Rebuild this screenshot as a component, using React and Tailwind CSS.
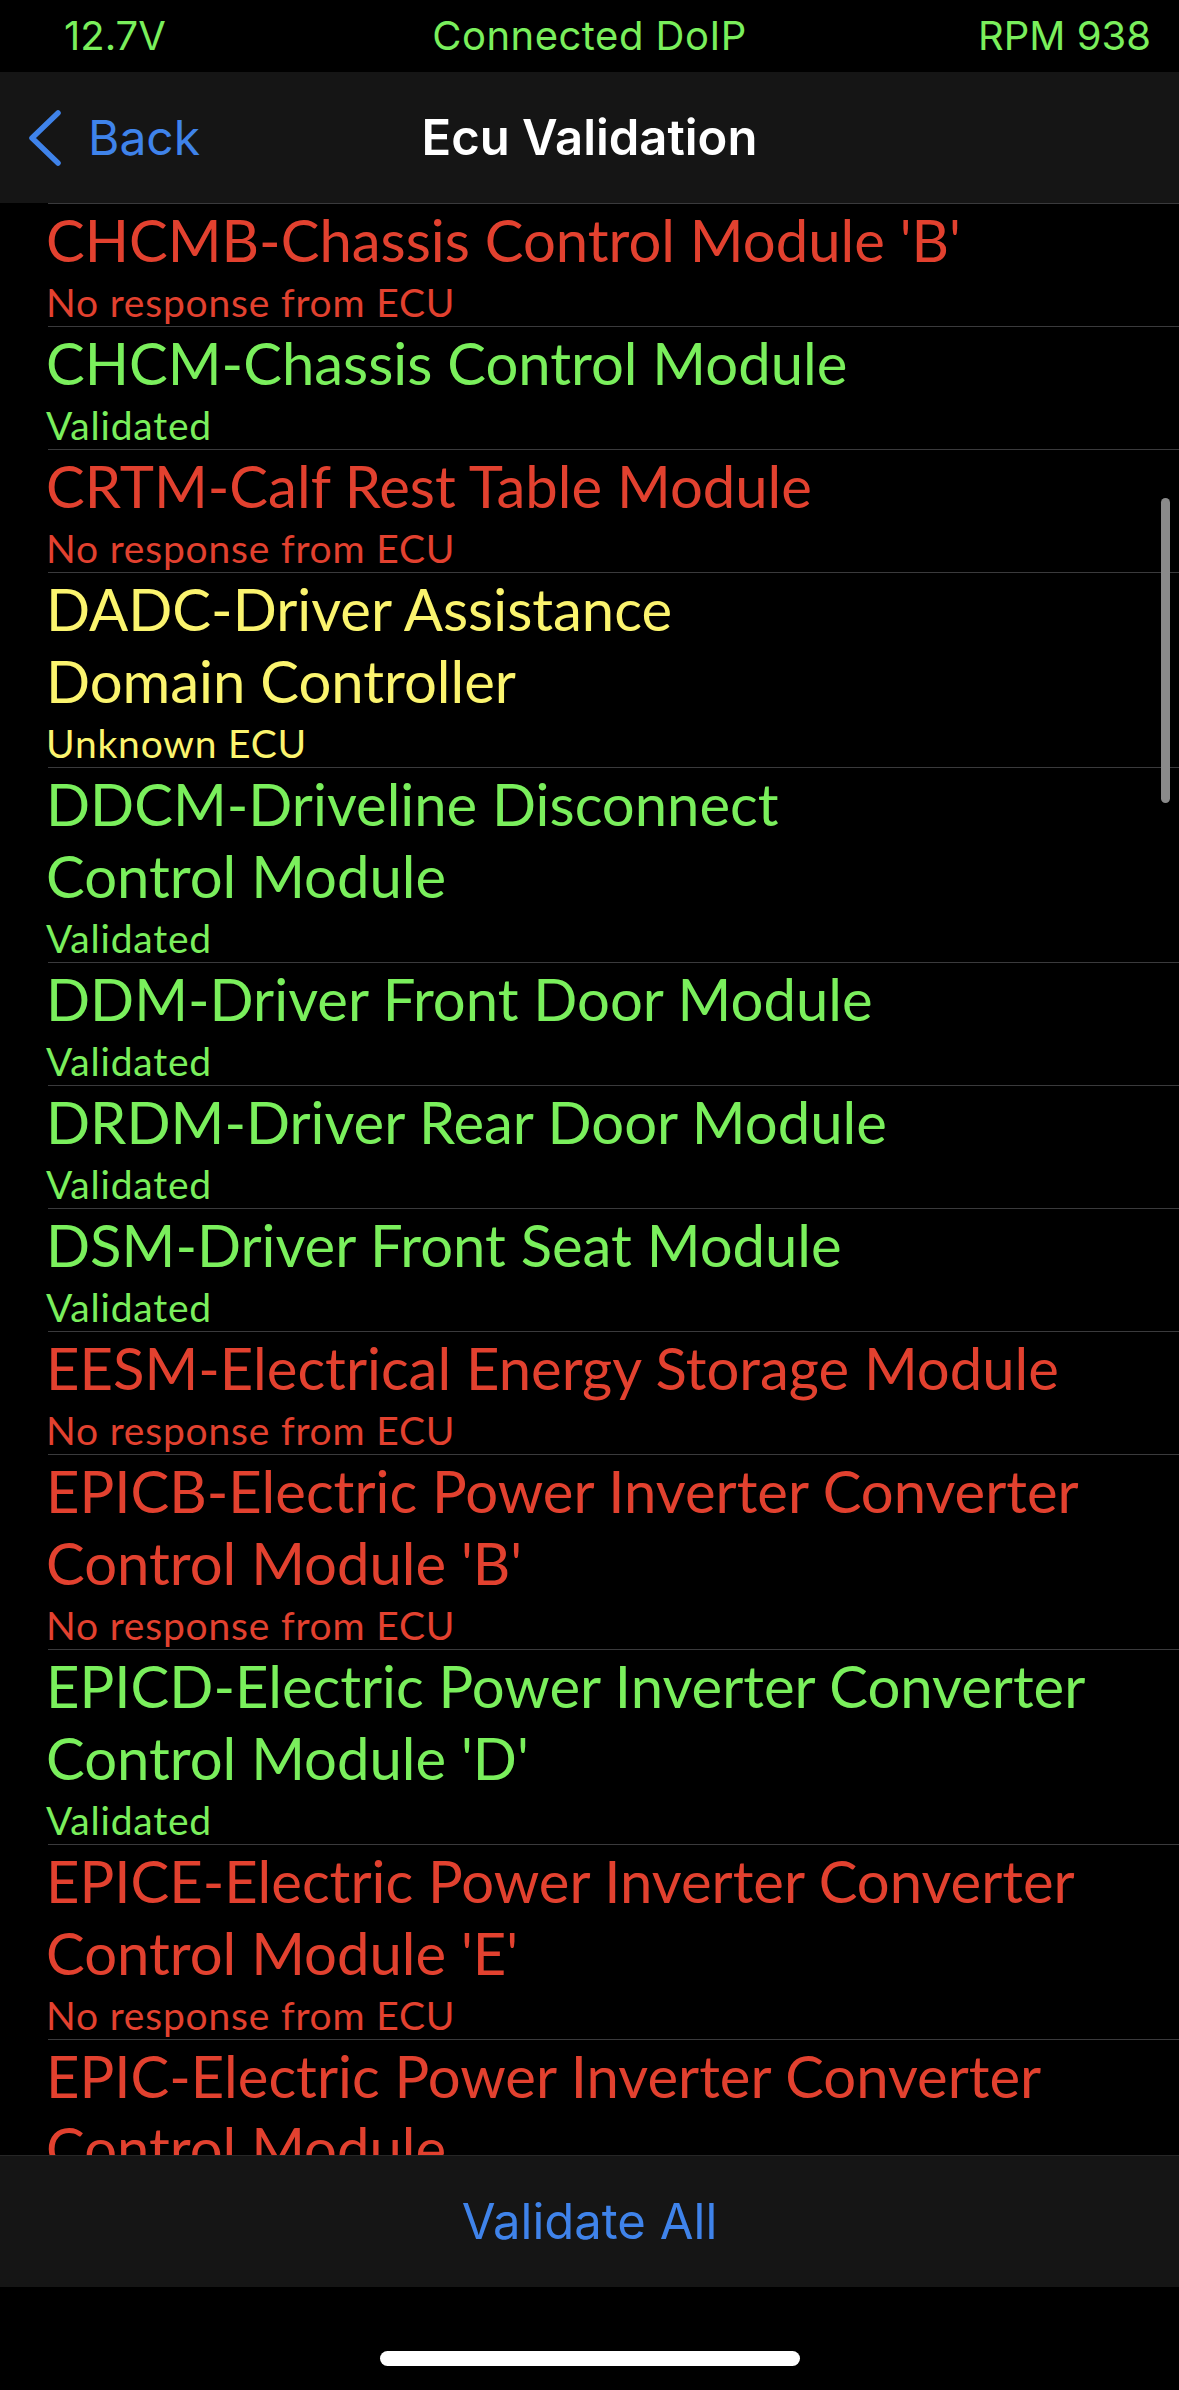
import React from 'react';

const RED = 'text-[#e2412f]';
const GREEN = 'text-[#7aef5c]';
const YELLOW = 'text-[#fbf46e]';

const ecus = [
  { lines: ["CHCMB-Chassis Control Module 'B'"], status: 'No response from ECU', color: RED },
  { lines: ['CHCM-Chassis Control Module'], status: 'Validated', color: GREEN },
  { lines: ['CRTM-Calf Rest Table Module'], status: 'No response from ECU', color: RED },
  { lines: ['DADC-Driver Assistance', 'Domain Controller'], status: 'Unknown ECU', color: YELLOW },
  { lines: ['DDCM-Driveline Disconnect', 'Control Module'], status: 'Validated', color: GREEN },
  { lines: ['DDM-Driver Front Door Module'], status: 'Validated', color: GREEN },
  { lines: ['DRDM-Driver Rear Door Module'], status: 'Validated', color: GREEN },
  { lines: ['DSM-Driver Front Seat Module'], status: 'Validated', color: GREEN },
  { lines: ['EESM-Electrical Energy Storage Module'], status: 'No response from ECU', color: RED },
  { lines: ['EPICB-Electric Power Inverter Converter', "Control Module 'B'"], status: 'No response from ECU', color: RED },
  { lines: ['EPICD-Electric Power Inverter Converter', "Control Module 'D'"], status: 'Validated', color: GREEN },
  { lines: ['EPICE-Electric Power Inverter Converter', "Control Module 'E'"], status: 'No response from ECU', color: RED },
  { lines: ['EPIC-Electric Power Inverter Converter', 'Control Module'], status: 'No response from ECU', color: RED },
];

function EcuRow({ ecu }) {
  return (
    <div>
      {/* separator, inset like a UITableView cell */}
      <div className="ml-[48px] h-px bg-[#3a3a3c]" />
      <div className={`pl-[46px] ${ecu.color} font-['Lato',sans-serif]`}>
        {ecu.lines.map((l, i) => (
          <div key={l} className={`text-[58px] leading-[71px] whitespace-nowrap ${i > 0 ? 'mt-[1px]' : ''}`}>{l}</div>
        ))}
        <div className="mt-[4px] text-[39px] leading-[47px] tracking-[0.8px] whitespace-nowrap">{ecu.status}</div>
      </div>
    </div>
  );
}

export default function App() {
  return (
    <div className="h-[2390px] w-full flex flex-col bg-black overflow-hidden font-['Inter',sans-serif]">
      {/* status bar */}
      <div className="h-[72px] grid grid-cols-[1fr_auto_1fr] items-center px-[28px] text-[40px] text-[#7aef5c]">
        <span className="pl-[36px]">12.7V</span>
        <span className="text-center whitespace-nowrap tracking-[0.5px]">Connected DoIP</span>
        <span className="text-right">RPM 938</span>
      </div>

      {/* navigation bar */}
      <div className="h-[131px] relative flex items-center bg-[#151515]">
        <button className="flex items-center pl-[28px] text-[#3f83ea]">
          <svg width="34" height="56" viewBox="0 0 34 56" fill="none" stroke="currentColor" strokeWidth="5.5" strokeLinecap="round" strokeLinejoin="round">
            <path d="M30 3 L4 28 L30 53" />
          </svg>
          <span className="ml-[26px] text-[48px]">Back</span>
        </button>
        <div className="absolute inset-0 flex items-center justify-center pointer-events-none">
          <span className="text-white text-[49px] font-semibold">Ecu Validation</span>
        </div>
      </div>

      {/* list */}
      <div className="flex-1 relative overflow-hidden">
        {ecus.map((e) => (
          <EcuRow key={e.lines[0]} ecu={e} />
        ))}
        {/* scroll indicator */}
        <div className="absolute left-[1161px] top-[295px] w-[9px] h-[305px] rounded-full bg-[#8a8a8a]" />
      </div>

      {/* bottom toolbar */}
      <div className="h-[132px] flex items-center justify-center bg-[#151515] border-t border-[#262626]">
        <span className="text-[49px] text-[#3f83ea]">Validate All</span>
      </div>

      {/* home indicator */}
      <div className="h-[103px] flex justify-center pt-[64px]">
        <div className="w-[420px] h-[15px] rounded-full bg-white" />
      </div>
    </div>
  );
}
